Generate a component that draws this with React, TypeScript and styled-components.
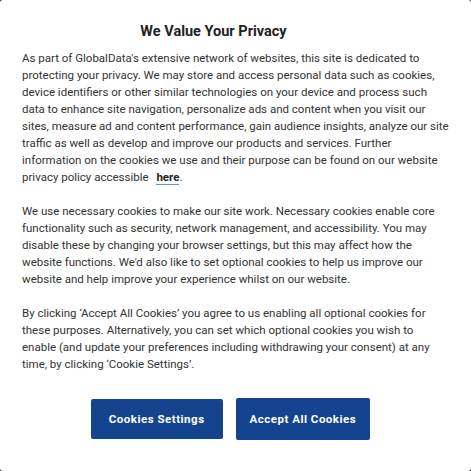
import React from "react";
import styled, { createGlobalStyle } from "styled-components";

const Global = createGlobalStyle`
  html, body { margin: 0; padding: 0; background: #3a3a3a; }
  body { font-family: "Roboto", "Liberation Sans", sans-serif; }
`;

const Dialog = styled.div`
  box-sizing: border-box;
  width: 471px;
  height: 471px;
  background: #fff;
  border-radius: 3px;
  padding: 22px 22px 0 22px;
  display: flex;
  flex-direction: column;
`;

const Title = styled.h2`
  margin: 0 0 8px 0;
  padding-right: 44px;
  text-align: center;
  font-size: 14.5px;
  line-height: 20px;
  font-weight: 700;
  color: #222;
`;

const Para = styled.p`
  margin: 0 0 17px 0;
  font-size: 11.5px;
  line-height: 17px;
  color: #333;
  white-space: nowrap;
`;

const Link = styled.a`
  margin-left: 5px;
  font-weight: 700;
  color: #222;
  text-decoration: none;
  border-bottom: 1px solid #6b8fd0;
`;

const Actions = styled.div`
  display: flex;
  justify-content: center;
  gap: 13px;
  margin-top: 9px;
  margin-left: -10px;
`;

const Button = styled.button<{ $primary?: boolean }>`
  height: ${(p) => (p.$primary ? 42 : 40)}px;
  margin-top: ${(p) => (p.$primary ? -1 : 0)}px;
  padding: 0 ${(p) => (p.$primary ? 14 : 18)}px;
  background: #144390;
  color: #fff;
  border: none;
  border-radius: 2px;
  font-family: "Roboto", "Liberation Sans", sans-serif;
  font-size: 11.5px;
  font-weight: 700;
  letter-spacing: 0.5px;
`;

export default function App() {
  return (
    <>
      <Global />
      <Dialog>
        <Title>We Value Your Privacy</Title>
        <Para>
          As part of GlobalData's extensive network of websites, this site is dedicated to<br />
          protecting your privacy. We may store and access personal data such as cookies,<br />
          device identifiers or other similar technologies on your device and process such<br />
          data to enhance site navigation, personalize ads and content when you visit our<br />
          sites, measure ad and content performance, gain audience insights, analyze our site<br />
          traffic as well as develop and improve our products and services. Further<br />
          information on the cookies we use and their purpose can be found on our website<br />
          privacy policy accessible <Link href="#">here</Link>.
        </Para>
        <Para>
          We use necessary cookies to make our site work. Necessary cookies enable core<br />
          functionality such as security, network management, and accessibility. You may<br />
          disable these by changing your browser settings, but this may affect how the<br />
          website functions. We'd also like to set optional cookies to help us improve our<br />
          website and help improve your experience whilst on our website.
        </Para>
        <Para>
          By clicking ‘Accept All Cookies’ you agree to us enabling all optional cookies for<br />
          these purposes. Alternatively, you can set which optional cookies you wish to<br />
          enable (and update your preferences including withdrawing your consent) at any<br />
          time, by clicking ‘Cookie Settings’.
        </Para>
        <Actions>
          <Button>Cookies Settings</Button>
          <Button $primary>Accept All Cookies</Button>
        </Actions>
      </Dialog>
    </>
  );
}
